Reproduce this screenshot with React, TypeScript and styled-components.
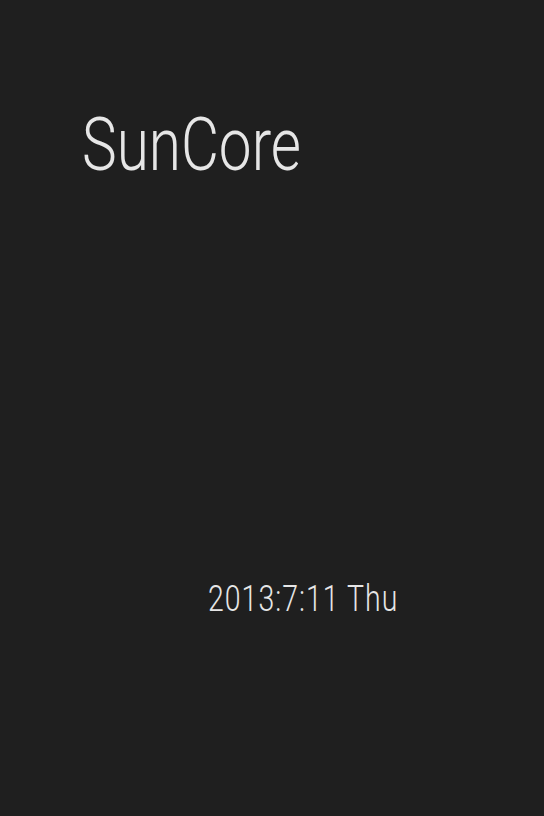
import React from 'react'
import styled, { createGlobalStyle } from 'styled-components'

const GlobalStyle = createGlobalStyle`
  html, body {
    margin: 0;
    padding: 0;
    background: #1f1f1f;
  }
`

const Screen = styled.div`
  width: 544px;
  height: 816px;
  background: #1f1f1f;
  display: flex;
  flex-direction: column;
  font-family: Roboto, "Noto Sans", sans-serif;
  color: #e6e6e6;
  overflow: hidden;
`

const TitleRow = styled.div`
  padding: 101px 0 0 82px;
`

const Title = styled.h1`
  display: inline-block;
  margin: 0;
  font-size: 74px;
  font-weight: 300;
  line-height: 1.2;
  transform: scaleX(0.79);
  transform-origin: left top;
  white-space: nowrap;
`

const DateRow = styled.div`
  margin-top: auto;
  margin-bottom: 195px;
  padding-left: 208px;
`

const DateText = styled.span`
  display: inline-block;
  font-size: 36px;
  font-weight: 300;
  line-height: 1.2;
  letter-spacing: 1.3px;
  transform: scaleX(0.79);
  transform-origin: left top;
  white-space: nowrap;
`

const App = () => {
  return (
    <Screen>
      <GlobalStyle />
      <TitleRow>
        <Title>SunCore</Title>
      </TitleRow>
      <DateRow>
        <DateText>2013:7:11 Thu</DateText>
      </DateRow>
    </Screen>
  )
}

export default App
